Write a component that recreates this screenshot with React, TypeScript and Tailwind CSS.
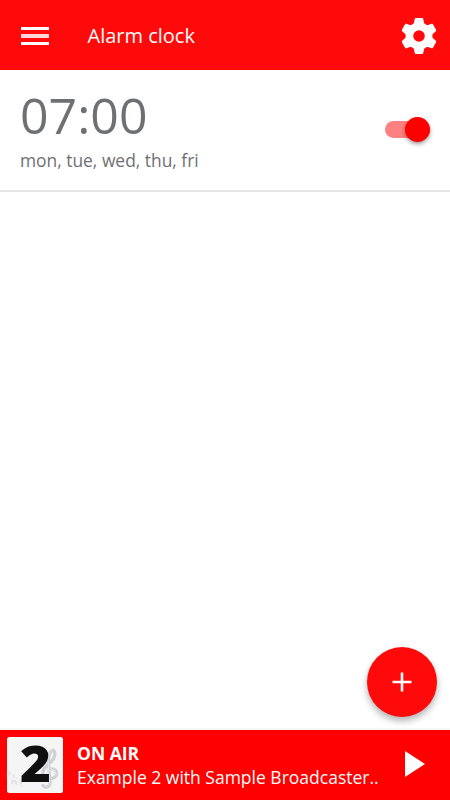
function Gear() {
  return (
    <svg className="size-9" viewBox="-18 -18 36 36" fill="#fcfcfc" stroke="#fcfcfc" strokeLinejoin="round">
      <circle r="9.6" fill="none" strokeWidth="7.6" />
      {[0, 60, 120, 180, 240, 300].map((angle) => (
        <path
          key={angle}
          transform={`rotate(${angle})`}
          strokeWidth="2.4"
          d="M-3.1 -16.7H3.1L4 -12.4L5.4 -10H-5.4L-4 -12.4Z"
        />
      ))}
    </svg>
  );
}

function Header() {
  return (
    <header className="flex h-[70px] items-center bg-[#ff0a0a] pl-[21px] pr-[13px] text-[#fcfcfc]">
      <button aria-label="Menu" className="flex w-7 flex-col pt-0.5">
        <span className="h-[3px] w-full bg-[#fcfcfc]" />
        <span className="mt-1 h-1 w-full bg-[#fcfcfc]/85" />
        <span className="mt-1 h-[3px] w-full bg-[#fcfcfc]" />
      </button>
      <h1 className="ml-[38.5px] flex-1 pt-0.5 text-[20px] leading-[28px]">Alarm clock</h1>
      <button aria-label="Settings" className="pt-0.5">
        <Gear />
      </button>
    </header>
  );
}

function Toggle() {
  return (
    <button
      role="switch"
      aria-checked="true"
      aria-label="Alarm enabled"
      className="flex h-[17px] w-[45px] items-center justify-end rounded-full bg-[#ff8080]"
    >
      <span className="size-[25px] shrink-0 rounded-full bg-[#ff0000] shadow-[0_2px_4px_rgba(0,0,0,0.4)]" />
    </button>
  );
}

function AlarmRow() {
  return (
    <div className="flex h-[122px] items-start justify-between border-b-2 border-[#e6e6e6] pl-5 pr-5">
      <div className="text-[#6f7072]">
        <div className="mt-5 text-[50px] leading-[50px]">07:00</div>
        <div className="mt-2 text-[17.4px] leading-6">mon, tue, wed, thu, fri</div>
      </div>
      <div className="mt-[51px]">
        <Toggle />
      </div>
    </div>
  );
}

function Cover() {
  return (
    <svg className="h-14 w-14 shrink-0 overflow-visible" viewBox="0 0 56 56">
      <rect width="56" height="56" rx="2.5" fill="#f5f5f5" />
      <g fill="none" stroke="#cfd0d6" strokeLinecap="round">
        <path
          strokeWidth="3.2"
          d="M36 48.5C38 51.5 43 50 43 46L41.5 24C41 18 44 13 46.5 13C49 16 48 21 44 25C38 29 35 33 36 38C38 42.5 47 43 49.5 38C50.5 32 44 30 42 34"
        />
        <path strokeWidth="1" stroke="#e6e7eb" d="M37 48.5C39 51 42.5 49.5 42.5 46L41 24C40.5 18 43.5 13 46 13M49 38C50 32.5 44 30.5 42 34" />
        <path strokeWidth="0.5" stroke="#e2e3e6" d="M0 35c6 0 7 8 16 8M0 38c6 0 7 8 16 8M0 41c6 0 7 8 16 8" />
        <path strokeWidth="0.9" stroke="#d5d6db" d="M2 38v-4M5 47v-3h4v3M14 47v-4M7 40v-2" />
      </g>
      <text
        x="13"
        y="45"
        fill="#101010"
        fontSize="49"
        fontWeight="800"
        fontFamily="'Open Sans', sans-serif"
        textLength="31"
        lengthAdjust="spacingAndGlyphs"
      >
        2
      </text>
    </svg>
  );
}

function Player() {
  return (
    <footer className="flex h-[70px] items-center bg-[#ff0000] pl-[7px] pr-[25px] text-[#fcfcfc]">
      <Cover />
      <div className="ml-[14px] flex-1 whitespace-nowrap pb-px text-[17.5px] leading-6">
        <div className="font-bold">ON AIR</div>
        <div>Example 2 with Sample Broadcaster..</div>
      </div>
      <button aria-label="Play" className="pb-0.5">
        <svg className="h-[26px] w-5" viewBox="0 0 20 26" fill="currentColor">
          <path d="M0 0L20 13L0 26Z" />
        </svg>
      </button>
    </footer>
  );
}

export default function App() {
  return (
    <div className="flex h-[800px] w-[450px] flex-col overflow-hidden bg-white font-['Open_Sans',sans-serif]">
      <Header />
      <main className="relative flex-1">
        <AlarmRow />
        <button
          aria-label="Add alarm"
          className="absolute bottom-[11px] right-[12.6px] flex size-[70px] items-center justify-center rounded-full bg-[#ff0a0a] shadow-[0_4px_7px_rgba(0,0,0,0.3)]"
        >
          <svg className="size-5" viewBox="0 0 20 20" stroke="#fcfcfc" strokeWidth="2.6">
            <path d="M10 0.5V19.5M0.5 10H19.5" />
          </svg>
        </button>
      </main>
      <div className="h-[2px] bg-[#f5f7f7]" />
      <Player />
    </div>
  );
}
